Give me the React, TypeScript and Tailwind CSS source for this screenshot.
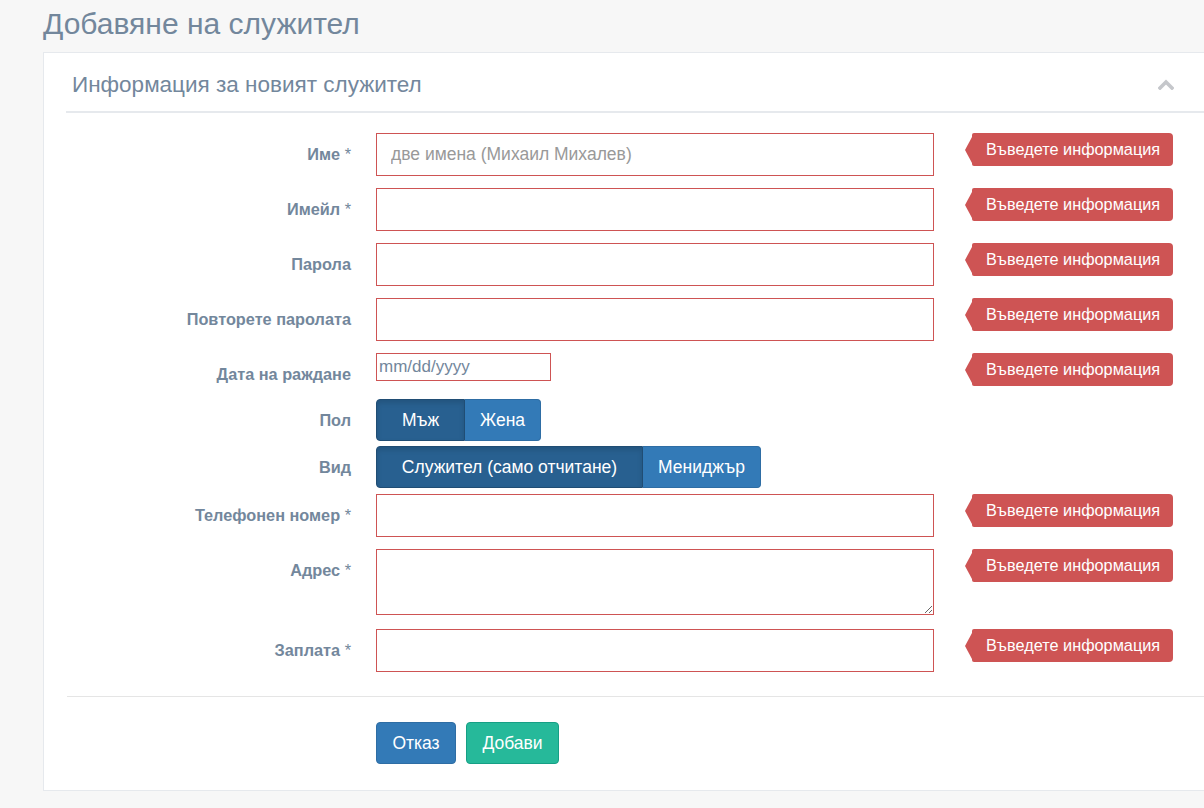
import React from "react";

const Tip = () => (
  <div className="ml-[31px] flex h-[33px] items-center">
    <div className="h-0 w-0 border-y-[13px] border-r-[7px] border-y-transparent border-r-[#CE5454]" />
    <div className="flex h-[33px] items-center rounded-r-[4px] rounded-l-[2px] bg-[#CE5454] pl-[14px] pr-[13px] text-[16.3px] text-white">
      Въведете информация
    </div>
  </div>
);

const Label = ({ text, req }: { text: string; req?: boolean }) => (
  <div className="flex h-[43px] w-[285px] shrink-0 items-center justify-end text-[16.3px] font-bold text-[#73879C]">
    <span>
      {text}
      {req && <span className="font-normal"> *</span>}
    </span>
  </div>
);

const inputCls =
  "ml-[25px] h-[43px] w-[558px] shrink-0 border border-[#CE5454] bg-white px-[14px] text-[17.5px] text-[#555] outline-none placeholder:text-[#999]";

export default function App() {
  return (
    <div className="h-[808px] w-[1204px] overflow-hidden bg-[#F7F7F7] font-['Liberation_Sans',Arial,sans-serif] text-[#73879C]">
      <div className="pl-[43px]">
        <div className="h-[52px] pt-[9px] text-[30px] leading-[30px]">Добавяне на служител</div>
        <div className="w-[1190px] border border-[#E6E9ED] bg-white px-[22px] pt-[12px] pb-[26px]">
          <div className="flex items-center border-b-2 border-[#E6E9ED] pt-[6px] pb-[13px] pl-[6px]">
            <div className="flex-1 text-[22.5px] leading-[27px]">Информация за новият служител</div>
            <svg width="16" height="11" viewBox="0 0 16 11" className="mr-[36px]">
              <polyline points="2,9 8,3 14,9" fill="none" stroke="#C5C7CB" strokeWidth="3.6" strokeLinecap="square" />
            </svg>
          </div>

          <div className="pt-[20px]">
            <div className="mb-[12px] flex items-start">
              <Label text="Име" req />
              <input className={inputCls} placeholder="две имена (Михаил Михалев)" />
              <Tip />
            </div>
            <div className="mb-[12px] flex items-start">
              <Label text="Имейл" req />
              <input className={inputCls} />
              <Tip />
            </div>
            <div className="mb-[12px] flex items-start">
              <Label text="Парола" />
              <input className={inputCls} type="password" />
              <Tip />
            </div>
            <div className="mb-[12px] flex items-start">
              <Label text="Повторете паролата" />
              <input className={inputCls} type="password" />
              <Tip />
            </div>
            <div className="mb-[3px] flex items-start">
              <Label text="Дата на раждане" />
              <div className="ml-[25px] flex h-[28px] w-[175px] shrink-0 items-center border border-[#CE5454] bg-white pl-[2px] text-[17px] text-[#73879C]">
                mm/dd/yyyy
              </div>
              <div className="ml-[383px]">
                <Tip />
              </div>
            </div>
            <div className="mb-[4px] flex items-start">
              <Label text="Пол" />
              <div className="ml-[25px] flex h-[42px] text-[17.5px] text-white">
                <div className="flex w-[89px] items-center justify-center rounded-l-[4px] border border-[#204d74] bg-[#286090] shadow-[inset_0_3px_5px_rgba(0,0,0,0.125)]">
                  Мъж
                </div>
                <div className="flex w-[76px] items-center justify-center rounded-r-[4px] border border-l-0 border-[#2e6da4] bg-[#337AB7]">
                  Жена
                </div>
              </div>
            </div>
            <div className="mb-[5px] flex items-start">
              <Label text="Вид" />
              <div className="ml-[25px] flex h-[42px] text-[17.5px] text-white">
                <div className="flex w-[267px] items-center justify-center rounded-l-[4px] border border-[#204d74] bg-[#286090] shadow-[inset_0_3px_5px_rgba(0,0,0,0.125)]">
                  Служител (само отчитане)
                </div>
                <div className="flex w-[118px] items-center justify-center rounded-r-[4px] border border-l-0 border-[#2e6da4] bg-[#337AB7]">
                  Мениджър
                </div>
              </div>
            </div>
            <div className="mb-[12px] flex items-start">
              <Label text="Телефонен номер" req />
              <input className={inputCls} />
              <Tip />
            </div>
            <div className="mb-[14px] flex items-start">
              <Label text="Адрес" req />
              <textarea className={inputCls + " block !h-[66px] resize-y py-[8px]"} />
              <Tip />
            </div>
            <div className="flex items-start">
              <Label text="Заплата" req />
              <input className={inputCls} />
              <Tip />
            </div>

            <div className="mt-[24px] mb-[25px] ml-[1px] border-t border-[#E5E5E5]" />

            <div className="flex gap-[10px] pl-[310px] text-[17.5px] text-white">
              <button className="h-[42px] w-[80px] rounded-[4px] border border-[#2e6da4] bg-[#337AB7]">Отказ</button>
              <button className="h-[42px] w-[93px] rounded-[4px] border border-[#169F85] bg-[#26B99A]">Добави</button>
            </div>
          </div>
        </div>
      </div>
    </div>
  );
}
